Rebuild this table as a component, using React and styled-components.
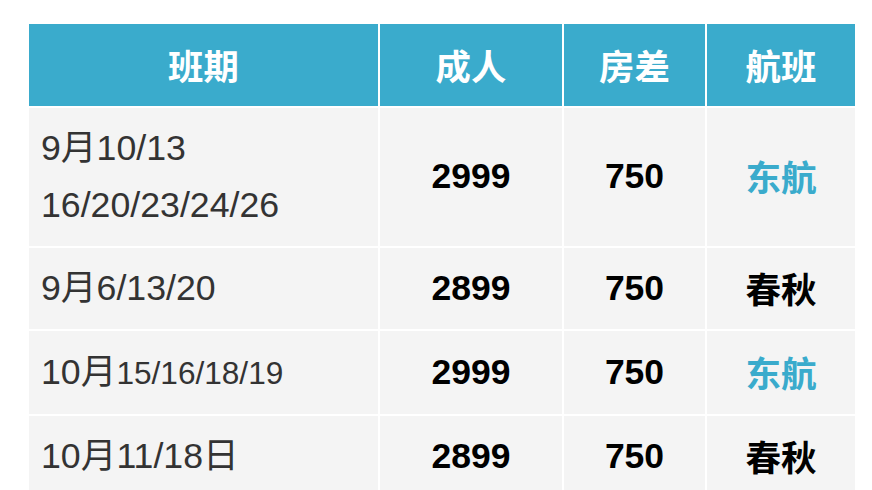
import React from "react"
import styled, { createGlobalStyle } from "styled-components"

const GlobalStyle = createGlobalStyle`
  html, body {
    margin: 0;
    padding: 0;
    background: #fff;
  }
  body {
    font-family: "Liberation Sans", Arial, "Noto Sans CJK SC", sans-serif;
  }
`

const Page = styled.div`
  padding: 24px 0 0 29px;
`

const Table = styled.div`
  display: grid;
  grid-template-columns: 349px 182px 141px 148px;
  gap: 2px;
  width: 826px;
`

const HeadCell = styled.div`
  background: #3aabcc;
  color: #fff;
  font-family: "Noto Sans CJK SC", "Liberation Sans", sans-serif;
  font-weight: 700;
  font-size: 35.4px;
  line-height: 56.6px;
  padding: 12.5px 0;
  text-align: center;
`

const Cell = styled.div`
  display: flex;
  align-items: center;
  justify-content: ${(p) => (p.$left ? "flex-start" : "center")};
  background: #f4f4f4;
  padding: 12.5px ${(p) => (p.$left ? "12px" : "0")};
  font-size: ${(p) => (p.$left ? "35.7px" : "35.5px")};
  line-height: 56.6px;
  color: ${(p) => (p.$left ? "#333" : "#000")};
  font-weight: ${(p) => (p.$left ? 400 : 700)};
`

const Dates = styled.div`
  text-align: left;
`

const Small = styled.span`
  font-size: 31.6px;
`

const Airline = styled.span`
  font-family: "Noto Sans CJK SC", "Liberation Sans", sans-serif;
  font-weight: 700;
  font-size: 35.6px;
  color: ${(p) => (p.$blue ? "#3aabcc" : "#000")};
`

const rows = [
  {
    dates: (
      <>
        9月10/13
        <br />
        16/20/23/24/26
      </>
    ),
    adult: "2999",
    room: "750",
    airline: "东航",
    blue: true,
  },
  { dates: "9月6/13/20", adult: "2899", room: "750", airline: "春秋" },
  {
    dates: (
      <>
        10月<Small>15/16/18/19</Small>
      </>
    ),
    adult: "2999",
    room: "750",
    airline: "东航",
    blue: true,
  },
  { dates: "10月11/18日", adult: "2899", room: "750", airline: "春秋" },
]

export default function App() {
  return (
    <Page>
      <GlobalStyle />
      <Table>
        <HeadCell>班期</HeadCell>
        <HeadCell>成人</HeadCell>
        <HeadCell>房差</HeadCell>
        <HeadCell>航班</HeadCell>
        {rows.map((r, i) => (
          <React.Fragment key={i}>
            <Cell $left>
              <Dates>{r.dates}</Dates>
            </Cell>
            <Cell>{r.adult}</Cell>
            <Cell>{r.room}</Cell>
            <Cell>
              <Airline $blue={r.blue}>{r.airline}</Airline>
            </Cell>
          </React.Fragment>
        ))}
      </Table>
    </Page>
  )
}
